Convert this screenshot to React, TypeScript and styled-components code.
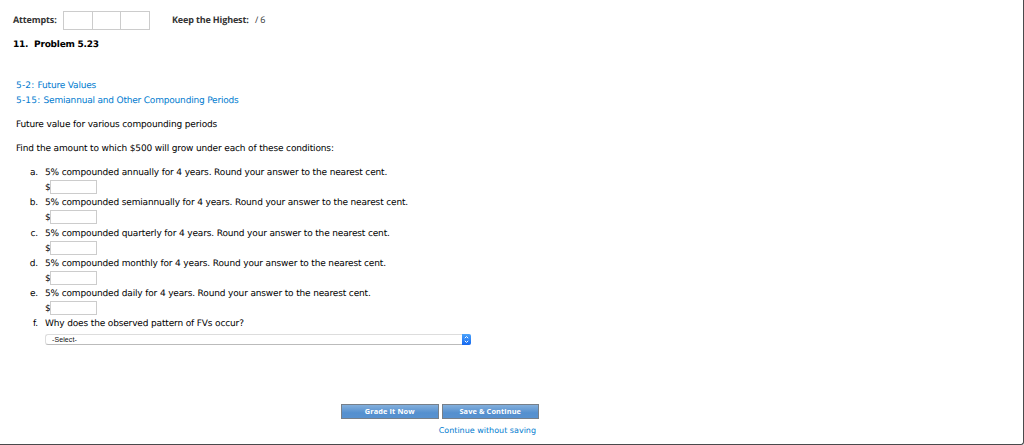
import styled, { createGlobalStyle } from "styled-components";

const GlobalStyle = createGlobalStyle`
  * {
    box-sizing: border-box;
  }
  body {
    margin: 0;
    background: #fff;
  }
`;

const Page = styled.main`
  height: 445px;
  overflow: hidden;
  border-right: 1px solid #4a4a4c;
  border-bottom: 1px solid #4a4a4c;
  border-bottom-right-radius: 3px;
  font-family: "DejaVu Sans", Verdana, sans-serif;
  font-size: 9px;
  line-height: 15px;
  letter-spacing: -0.15px;
  text-rendering: geometricPrecision;
  color: #000;
`;
const ScoreBar = styled.header`
  display: flex;
  align-items: center;
  height: 19px;
  margin: 11px 0 0 13px;
  font-family: "Open Sans", "Noto Sans", sans-serif;
  font-size: 9px;
  line-height: 17px;
  letter-spacing: -0.14px;
  color: #333;
`;
const ScoreLabel = styled.strong<{ $width: number }>`
  width: ${(props) => props.$width}px;
  height: 19px;
  font-weight: 700;
  white-space: nowrap;
`;
const Score = styled.span`
  height: 19px;
`;
const Attempts = styled.div`
  display: flex;
  width: 87px;
  height: 19px;
  margin-right: 22px;
  border: 1px solid #ccc;
`;
const Attempt = styled.div`
  width: 28px;

  & + & {
    width: 29px;
    border-left: 1px solid #ccc;
  }
`;
const Title = styled.h1`
  margin: 8px 0 0 13px;
  font-size: 9px;
  line-height: 15px;
  letter-spacing: -0.23px;
  color: #000;
  white-space: pre;
`;
const Content = styled.section`
  padding: 26px 0 0 16px;
`;
const Topic = styled.a`
  display: block;
  width: fit-content;
  line-height: 15px;
  letter-spacing: -0.19px;
  color: #007bcf;
`;
const TopicCode = styled.span`
  letter-spacing: 0.2px;
`;
const Paragraph = styled.p`
  margin: 9px 0 0;
`;
const Questions = styled.ol`
  margin: 9px 0 0;
  padding: 0;
  list-style: none;
`;
const Question = styled.li`
  display: grid;
  grid-template-columns: 22px 1fr;
  column-gap: 7px;
  height: 30.3px;
`;
const Marker = styled.span`
  text-align: right;
`;
const Sentence = styled.div`
  white-space: nowrap;
`;
const Answer = styled.label`
  display: flex;
  align-items: flex-start;
  height: 15px;
`;
const AmountInput = styled.input`
  width: 47px;
  height: 14px;
  margin: -1px 0 0 -1px;
  padding: 0 2px;
  border: 1px solid #ccc;
  background: #fff;
  font: inherit;
  outline: none;
`;
const Select = styled.button`
  display: flex;
  align-items: center;
  justify-content: space-between;
  width: 426px;
  height: 11px;
  margin-top: 2px;
  padding: 0 0 0 6px;
  border: 1px solid #ddd;
  border-right: 0;
  border-bottom-color: #bbb;
  border-radius: 3px;
  background: #fff;
  font: 7px/9px "Liberation Sans", Arial, sans-serif;
  letter-spacing: 0.1px;
  color: #111;
`;
const SelectArrows = styled.svg`
  flex: none;
  width: 9px;
  height: 11px;
  border-radius: 0 2px 2px 0;
  background: linear-gradient(#4ba3fb, #1468f0);
`;
const Actions = styled.footer`
  display: flex;
  flex-direction: column;
  align-items: flex-end;
  width: 539px;
  margin-top: 56px;
`;
const Buttons = styled.div`
  display: flex;
  gap: 3px;
`;
const Button = styled.button`
  width: 97.5px;
  height: 15px;
  padding: 0;
  border: 1px solid #777f88;
  background: linear-gradient(#83afdc, #5590cf 60%, #5791cf);
  font: 700 7.4px/12px "Open Sans", "Noto Sans", sans-serif;
  letter-spacing: 0.1px;
  color: #fff;
`;
const SkipLink = styled.a`
  margin: 4px 3px 0 0;
  font-size: 8px;
  letter-spacing: 0;
  color: #007bcf;
`;

const questions = [
  { id: "a", period: "annually" },
  { id: "b", period: "semiannually" },
  { id: "c", period: "quarterly" },
  { id: "d", period: "monthly" },
  { id: "e", period: "daily" },
];

const App = () => {
  return (
    <>
      <GlobalStyle />
      <Page>
        <ScoreBar>
          <ScoreLabel $width={50}>Attempts:</ScoreLabel>
          <Attempts>
            <Attempt />
            <Attempt />
            <Attempt />
          </Attempts>
          <ScoreLabel $width={83}>Keep the Highest:</ScoreLabel>
          <Score>/ 6</Score>
        </ScoreBar>
        <Title>11.  Problem 5.23</Title>
        <Content>
          <Topic>
            <TopicCode>5-2: </TopicCode>Future Values
          </Topic>
          <Topic>
            <TopicCode>5-15: </TopicCode>Semiannual and Other Compounding
            Periods
          </Topic>
          <Paragraph>Future value for various compounding periods</Paragraph>
          <Paragraph>
            Find the amount to which $500 will grow under each of these
            conditions:
          </Paragraph>
          <Questions>
            {questions.map(({ id, period }) => (
              <Question key={id}>
                <Marker>{id}.</Marker>
                <div>
                  <Sentence>
                    5% compounded {period} for 4 years. Round your answer to the
                    nearest cent.
                  </Sentence>
                  <Answer>
                    $<AmountInput />
                  </Answer>
                </div>
              </Question>
            ))}
            <Question>
              <Marker>f.</Marker>
              <div>
                <Sentence>Why does the observed pattern of FVs occur?</Sentence>
                <Select>
                  -Select-
                  <SelectArrows viewBox="0 0 9 11">
                    <path
                      d="M2.8 4.2 4.5 2.6 6.2 4.2M2.8 6.8 4.5 8.4 6.2 6.8"
                      fill="none"
                      stroke="#fff"
                    />
                  </SelectArrows>
                </Select>
              </div>
            </Question>
          </Questions>
        </Content>
        <Actions>
          <Buttons>
            <Button>Grade It Now</Button>
            <Button>Save &amp; Continue</Button>
          </Buttons>
          <SkipLink>Continue without saving</SkipLink>
        </Actions>
      </Page>
    </>
  );
};

export default App;
